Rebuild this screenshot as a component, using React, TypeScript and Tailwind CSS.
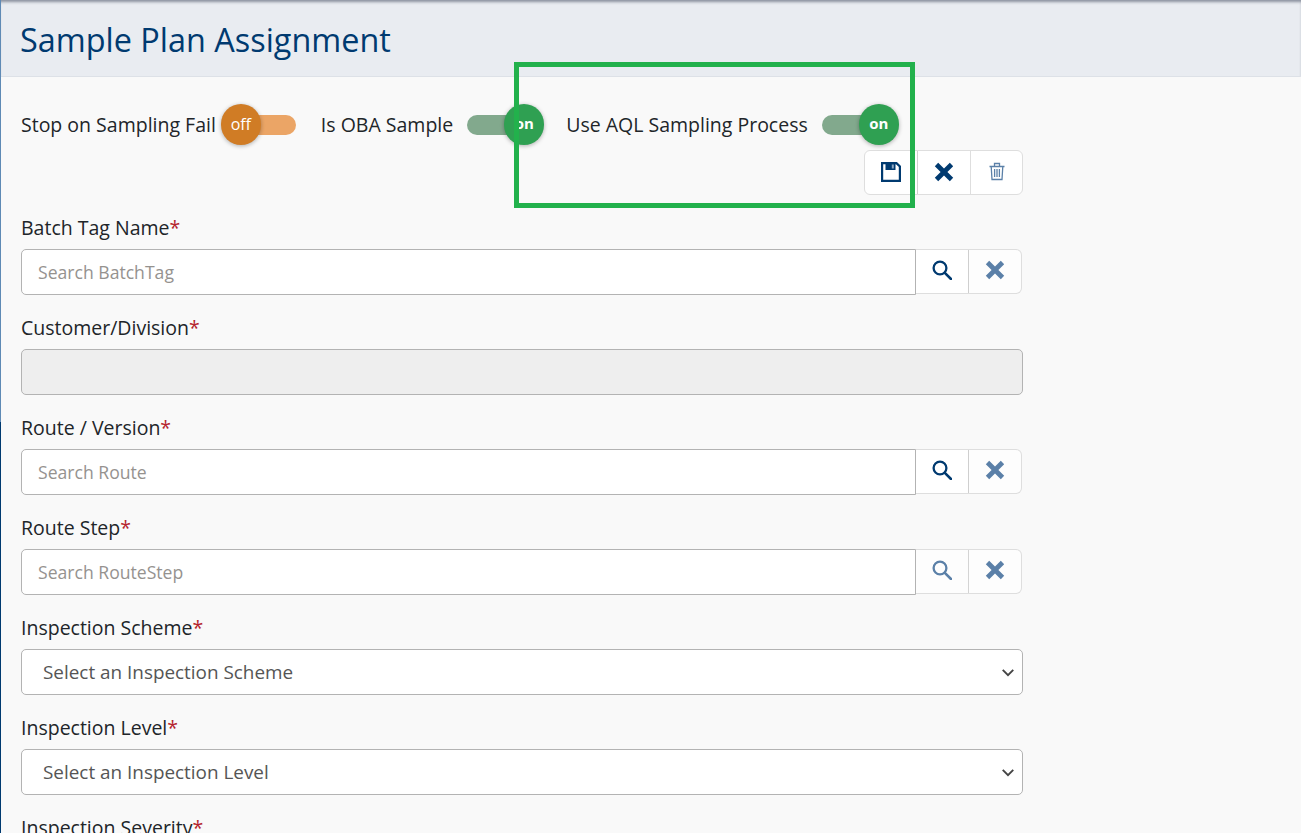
import { ReactNode } from "react";

// Filled heavy cross, same as the FontAwesome "times" glyph
function Cross({ className }: { className?: string }) {
  return (
    <svg viewBox="0 0 20 20" className={className} fill="currentColor" aria-hidden="true">
      <path d="M4.2 0.8 10 6.6 15.8 0.8 19.2 4.2 13.4 10 19.2 15.8 15.8 19.2 10 13.4 4.2 19.2 0.8 15.8 6.6 10 0.8 4.2Z" />
    </svg>
  );
}

function SearchGlyph() {
  return (
    <svg viewBox="0 0 20 20" className="h-5 w-5" fill="none" stroke="currentColor" aria-hidden="true">
      <circle cx="8" cy="8" r="6.4" strokeWidth="2.3" />
      <path d="M12.8 12.8 19 19" strokeWidth="2.6" strokeLinecap="round" />
    </svg>
  );
}

function SaveIcon() {
  return (
    <svg viewBox="0 0 20 20" className="h-5 w-5 text-[#003a70]" fill="none" aria-hidden="true">
      <path d="M1.1 1.1H15.5L18.9 4.5V18.9H1.1Z" stroke="currentColor" strokeWidth="2.2" />
      <path d="M4.5 1.5H14.5V8H4.5Z" fill="currentColor" />
      <path d="M10.8 2.6H12.8V6.6H10.8Z" fill="#8fa9c4" />
    </svg>
  );
}

function TrashIcon() {
  return (
    <svg viewBox="0 0 16 18" className="h-[19px] w-4 text-[#5b80a8]" fill="none" stroke="currentColor" strokeWidth="1.3" aria-hidden="true">
      <path d="M0.5 4H15.5" />
      <path d="M5.5 3.5V1H10.5V3.5" />
      <path d="M2.2 4 3 17H13L13.8 4" />
      <path d="M5.6 6.5V14.5M8 6.5V14.5M10.4 6.5V14.5" />
    </svg>
  );
}

function Toggle({ on }: { on: boolean }) {
  return (
    <div className={on ? "relative h-5 w-[60px] rounded-full bg-[#82a98d]" : "relative h-5 w-[60px] rounded-full bg-[#eba566]"}>
      <div
        className={
          on
            ? "absolute -right-[17px] -top-[11px] flex h-[41px] w-10 items-center justify-center rounded-full bg-[#2fa052] pb-[2px] text-[15px] font-bold text-white shadow-[0_1px_4px_rgba(0,0,0,0.3)]"
            : "absolute -left-[15px] -top-[11px] flex h-[41px] w-10 items-center justify-center rounded-full bg-[#d07c25] text-[16px] font-medium text-white shadow-[0_1px_4px_rgba(0,0,0,0.3)]"
        }
      >
        {on ? "on" : "off"}
      </div>
    </div>
  );
}

function Field({ label, children }: { label: string; children: ReactNode }) {
  return (
    <div className="mb-[21px]">
      <label className="mb-[8px] block h-[25px] text-[19.5px] font-medium leading-[23px] text-[#212529]">
        {label}
        <span className="text-[#b5232d]">*</span>
      </label>
      {children}
    </div>
  );
}

function SearchField({ label, placeholder, muted }: { label: string; placeholder: string; muted?: boolean }) {
  return (
    <Field label={label}>
      <div className="flex">
        <input
          placeholder={placeholder}
          className="h-[46px] w-[895px] rounded-l-[5px] border border-[#b3b3b3] bg-white px-4 text-[17.6px] text-[#333] outline-none placeholder:text-[#95928f]"
        />
        <div className="flex h-[45px] overflow-hidden rounded-r-[6px] border-y border-r border-[#dedede] bg-[#fdfdfd]">
          <button className={muted ? "flex w-[53px] items-center justify-center border-r border-[#d4d4d4] pb-[3px] text-[#5b80a8]" : "flex w-[53px] items-center justify-center border-r border-[#cfcfcf] bg-white pb-[3px] text-[#003a70]"}>
            <SearchGlyph />
          </button>
          <button className="flex w-[52px] items-center justify-center pb-[3px] text-[#5b80a8]">
            <Cross className="h-5 w-5" />
          </button>
        </div>
      </div>
    </Field>
  );
}

function SelectField({ label, placeholder }: { label: string; placeholder: string }) {
  return (
    <Field label={label}>
      <div className="flex h-[46px] items-center justify-between rounded-[5px] border border-[#b3b3b3] bg-white pl-[21px] pr-[7px] text-[18.9px] text-[#555]">
        <span>{placeholder}</span>
        <svg viewBox="0 0 16 16" className="h-[14px] w-[14px] text-[#444]" fill="none" stroke="currentColor" strokeWidth="2.2" aria-hidden="true">
          <path d="M2 5.5 8 11.5 14 5.5" />
        </svg>
      </div>
    </Field>
  );
}

export default function App() {
  return (
    <div className="relative h-[833px] overflow-hidden bg-[#f9f9f9] font-['Open_Sans',sans-serif]">
      {/* Title bar */}
      <div className="flex h-[77px] items-center border-b border-[#dde1e7] bg-[#e9ecf1] pl-5 pt-[2px] shadow-[inset_0_3px_3px_-1px_rgba(60,70,90,0.55)]">
        <h1 className="text-[32.4px] leading-none text-[#003a70]">Sample Plan Assignment</h1>
      </div>

      {/* Form body */}
      <div className="w-[1023px] pl-[21px]">
        <div className="flex h-[73px] items-center pt-[22px] text-[19.5px] font-medium text-[#212529]">
          <span>Stop on Sampling Fail</span>
          <div className="ml-5">
            <Toggle on={false} />
          </div>
          <span className="ml-[25px]">Is OBA Sample</span>
          <div className="ml-[14px]">
            <Toggle on />
          </div>
          <span className="ml-[39px]">Use AQL Sampling Process</span>
          <div className="ml-[14px]">
            <Toggle on />
          </div>
        </div>

        <div className="flex justify-end">
          <div className="flex h-[45px] overflow-hidden rounded-[6px] border border-[#dedede] bg-white">
            <button className="flex w-[53px] items-center justify-center border-r border-[#cfcfcf] pb-[2px]">
              <SaveIcon />
            </button>
            <button className="flex w-[53px] items-center justify-center border-r border-[#dedede] pb-[2px] text-[#003a70]">
              <Cross className="h-5 w-5" />
            </button>
            <button className="flex w-[51px] items-center justify-center pb-[2px]">
              <TrashIcon />
            </button>
          </div>
        </div>

        <div className="mt-[21px]">
          <SearchField label="Batch Tag Name" placeholder="Search BatchTag" />
          <Field label="Customer/Division">
            <div className="h-[46px] rounded-[5px] border border-[#b3b3b3] bg-[#eeeeee]" />
          </Field>
          <SearchField label="Route / Version" placeholder="Search Route" />
          <SearchField label="Route Step" placeholder="Search RouteStep" muted />
          <SelectField label="Inspection Scheme" placeholder="Select an Inspection Scheme" />
          <SelectField label="Inspection Level" placeholder="Select an Inspection Level" />
          <SelectField label="Inspection Severity" placeholder="Select an Inspection Severity" />
        </div>
      </div>

      {/* Left rail of the panel, lighter above the fold */}
      <div className="absolute left-0 top-0 h-[422px] w-px bg-[#5f8ab5]" />
      <div className="absolute bottom-0 left-0 top-[422px] w-px bg-[#003a70]" />

      {/* Highlight box drawn over the screenshot */}
      <div className="pointer-events-none absolute left-[514px] top-[62px] h-[146px] w-[401px] border-[5px] border-[#22b14c]" />
    </div>
  );
}
